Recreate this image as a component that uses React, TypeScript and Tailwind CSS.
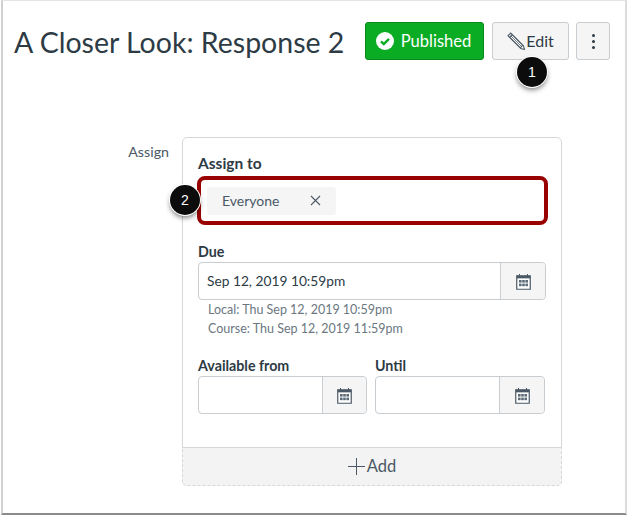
const font = { fontFamily: "Lato, 'Noto Sans', sans-serif" };

function CalendarIcon() {
  return (
    <svg width="15" height="17" viewBox="0 0 15 17" fill="none" aria-hidden="true">
      <path d="M0.75 2.75h13.5v13.5H0.75z" stroke="#4a5965" strokeWidth="1.2" fill="#fff" />
      <rect x="0.75" y="2.75" width="13.5" height="2.6" fill="#4a5965" />
      <path d="M3.5 1v2.5M11.5 1v2.5" stroke="#4a5965" strokeWidth="1" />
      {[3, 6.2, 9.4].map((x) =>
        [7, 10.6].map((y) => <rect key={`${x}-${y}`} x={x} y={y} width="2.6" height="2.6" fill="#5b6b77" />),
      )}
    </svg>
  );
}

function DateInput({ value, className, buttonClass }: { value?: string; className: string; buttonClass: string }) {
  return (
    <div className={`flex h-[38px] rounded-[4px] border border-[#c7cdd1] ${className}`}>
      <div className="flex flex-1 items-center pl-2 text-[13.75px] text-[#2d3b45]">{value}</div>
      <div className={`flex items-center justify-center rounded-r-[4px] border-l border-[#c7cdd1] bg-[#f5f5f5] ${buttonClass}`}>
        <CalendarIcon />
      </div>
    </div>
  );
}

function Callout({ n, className }: { n: number; className: string }) {
  return (
    <div
      className={`absolute flex h-[30px] w-[30px] items-center justify-center rounded-full bg-[#0c0c0c] text-[14px] text-white shadow-[0_3px_5px_rgba(0,0,0,0.5)] ring-1 ring-white ${className}`}
      style={{ fontFamily: "'Liberation Sans', sans-serif" }}
    >
      {n}
    </div>
  );
}

export default function App() {
  return (
    <div className="h-[517px] w-[628px] bg-white pl-[1px]" style={font}>
      <div className="relative h-[515px] w-[626px] border-b-2 border-l-2 border-r-2 border-t border-b-[#8a8a8a] border-l-[#d0d0d0] border-r-[#dcdcdc] border-t-[#e4e4e4] bg-white">
        <div className="flex items-start pl-[11px] pr-[15px] pt-[21px]">
          <h1 className="mt-[1px] flex-1 text-[28.5px] leading-[38px] text-[#2d3b45]">A Closer Look: Response 2</h1>
          <div className="flex items-center gap-[8px]">
            <button className="flex h-[38px] w-[119px] items-center justify-center gap-[7px] rounded-[3px] border border-[#07891a] bg-[#0aac24] pr-[2px] text-[16.5px] text-white">
              <svg width="18" height="18" viewBox="0 0 18 18" aria-hidden="true">
                <circle cx="9" cy="9" r="9" fill="#fff" />
                <path d="M5 9.3l2.8 2.7L13 6.8" fill="none" stroke="#0aac24" strokeWidth="2.4" />
              </svg>
              Published
            </button>
            <button className="flex h-[38px] w-[77px] items-center justify-center gap-[1px] rounded-[3px] border border-[#c7cdd1] bg-[#f5f5f5] text-[16px] text-[#2d3b45]">
              <svg width="18" height="18" viewBox="0 0 17 17" fill="none" stroke="#4a5965" strokeWidth="1" aria-hidden="true">
                <path d="M1 3.5 3.5 1l12 12 1 3.5-3.5-1z" />
                <path d="M2.5 5 5 2.5M12.5 15l2.5-2.5" />
                <path d="M3.5 3.5l10 10M5.5 3l8.5 8.5M3 5.5l8.5 8.5" strokeWidth="0.7" />
              </svg>
              Edit
            </button>
            <button className="ml-[-1px] flex h-[38px] w-[34px] flex-col items-center justify-center gap-[3px] rounded-[3px] border border-[#c7cdd1] bg-[#f5f5f5]">
              <span className="h-[3px] w-[3px] rounded-full bg-[#2d3b45]" />
              <span className="h-[3px] w-[3px] rounded-full bg-[#2d3b45]" />
              <span className="h-[3px] w-[3px] rounded-full bg-[#2d3b45]" />
            </button>
          </div>
        </div>

        <div className="mt-[76px] flex items-start">
          <div className="mt-[6px] w-[179px] pr-[13px] text-right text-[14.25px] leading-[18px] text-[#4a5965]">Assign</div>
          <div className="w-[380px] rounded-[5px] border border-[#d4d8db]">
            <div className="h-[309px] px-[15px] pt-[15px]">
              <div className="text-[15.5px] font-bold leading-[20px] text-[#2d3b45]">Assign to</div>
              <div className="relative ml-[-1px] mt-[3px] flex h-[49px] w-[351px] items-center rounded-[8px] border-[4px] border-[#990000] pl-[6px]">
                <div className="flex h-[28px] w-[129px] items-center rounded-[3px] bg-[#f5f5f5] pl-[15px] text-[14px] text-[#4a5965]">
                  <span className="flex-1">Everyone</span>
                  <svg className="mr-[15px]" width="11" height="11" viewBox="0 0 11 11" stroke="#4a5965" strokeWidth="1.1" aria-hidden="true">
                    <path d="M1 1l9 9M10 1l-9 9" />
                  </svg>
                </div>
              </div>
              <div className="mt-[18px] text-[14.25px] font-bold leading-[18px] text-[#2d3b45]">Due</div>
              <DateInput value="Sep 12, 2019 10:59pm" className="mt-[1px] w-[348px]" buttonClass="w-[45px]" />
              <div className="ml-[10px] text-[12.5px] leading-[19px] text-[#6b7780]">
                <div>Local: Thu Sep 12, 2019 10:59pm</div>
                <div>Course: Thu Sep 12, 2019 11:59pm</div>
              </div>
              <div className="mt-[19px] flex gap-[8px]">
                <div className="w-[169px]">
                  <div className="mb-[1px] text-[14.25px] font-bold leading-[18px] text-[#2d3b45]">Available from</div>
                  <DateInput className="w-[169px]" buttonClass="w-[44px]" />
                </div>
                <div className="w-[170px]">
                  <div className="mb-[1px] text-[14.25px] font-bold leading-[18px] text-[#2d3b45]">Until</div>
                  <DateInput className="w-[170px]" buttonClass="w-[45px]" />
                </div>
              </div>
            </div>
            <div className="mx-[-1px] mb-[-1px] flex h-[39px] items-center justify-center rounded-b-[5px] border border-dashed border-[#d4d8db] bg-[#f3f3f3] text-[16.5px] text-[#4a5965] [border-top-style:solid]">
              <svg width="17" height="17" viewBox="0 0 17 17" stroke="#4a5965" strokeWidth="1" aria-hidden="true">
                <path d="M8.5 0v17M0 8.5h17" />
              </svg>
              <span className="ml-[2px]">Add</span>
            </div>
          </div>
        </div>

        <Callout n={1} className="left-[514px] top-[56px]" />
        <Callout n={2} className="left-[167px] top-[184px]" />
      </div>
    </div>
  );
}
